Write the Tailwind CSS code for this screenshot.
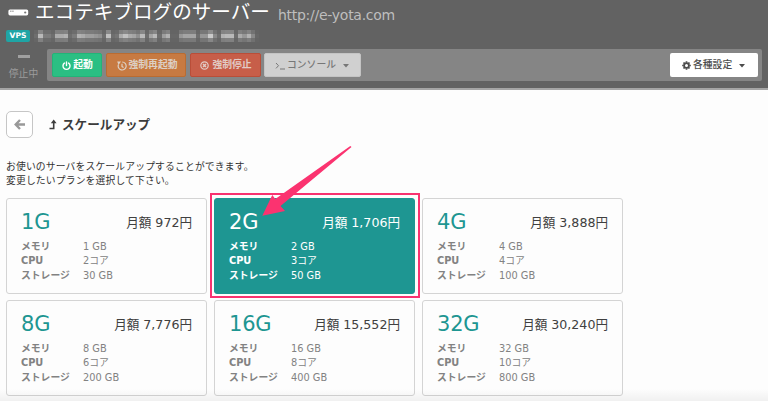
<!DOCTYPE html>
<html lang="ja">
<head>
<meta charset="utf-8">
<title>スケールアップ</title>
<script src="https://cdn.jsdelivr.net/npm/@tailwindcss/browser@4"></script>
</head>
<body class="relative h-[401px] w-[768px] overflow-hidden bg-[#fdfdfd] font-['DejaVu_Sans','Noto_Sans_CJK_JP',sans-serif] text-[9.8px] text-[#404040]">
<header class="h-[90px] border-b-2 border-[#a5a5a5] bg-[#626262]">
  <div class="flex h-[27px] items-center pl-[8px]">
    <svg class="mt-[-2px] shrink-0" width="21" height="7" viewBox="0 0 21 7"><rect x=".4" y=".4" width="19.8" height="6" rx="1.6" fill="#fff"/><path d="M2.3 2.2h1.1M4.4 2.2h1.1" stroke="#626262" stroke-width="1"/><circle cx="17.2" cy="3.5" r="1.1" fill="#777"/></svg>
    <h1 class="ml-[6px] mt-[-2px] whitespace-nowrap text-[19.6px] leading-[24px] text-white">エコテキブログのサーバー</h1>
    <span class="ml-[8px] mt-[3px] whitespace-nowrap text-[14px] leading-[18px] tracking-[-0.27px] text-[#bebebe]">http://e-yota.com</span>
  </div>
  <div class="flex h-[22px] items-start pl-[6px] pt-[3px]">
    <span class="flex h-[12px] w-[24px] items-center justify-center rounded-[2px] bg-[#1fa5a5] text-[7.6px] font-bold text-white">VPS</span>
    <svg id="mask" class="ml-[4px]" width="225" height="12" shape-rendering="crispEdges"></svg>
  </div>
  <div class="flex">
    <div class="flex w-[47px] flex-col items-center text-[#9c9c9c]">
      <span class="mt-[6px] h-[3px] w-[12px] bg-[#a0a0a0]"></span>
      <span class="mt-[9px] text-[9.8px] leading-[14px]">停止中</span>
    </div>
    <div class="flex h-[32px] w-[715px] items-center rounded-[2px] bg-[#858585] pl-[5px] pr-[5px] font-bold">
      <button class="flex h-[24px] w-[50px] items-center justify-center gap-[2px] whitespace-nowrap rounded-[2px] border border-[#23b478] bg-[#2bbf83] pl-[1px] pt-[1px] text-white">
        <svg width="9" height="10" viewBox="0 0 9 10" fill="none" stroke="currentColor" stroke-width="1.4" stroke-linecap="round"><path d="M2.4 2.1a3.5 3.5 0 1 0 4.2 0M4.5 1v3.6"/></svg>起動</button>
      <button class="ml-[4px] flex h-[24px] w-[80px] items-center justify-center gap-[2px] whitespace-nowrap rounded-[2px] border border-[#ba6c32] bg-[#c77a42] pl-[2px] pt-[1px] text-[#ddd0c5]">
        <svg width="10" height="10" viewBox="0 0 10 10" fill="none" stroke="currentColor" stroke-width="1.2"><path d="M5.2 1a4 4 0 1 1-3.7 2.4M5 2.8v2.8l1.6 1"/><path d="M.2.6h3.8L1.5 4z" fill="currentColor" stroke="none"/></svg>強制再起動</button>
      <button class="ml-[4px] flex h-[24px] w-[71px] items-center justify-center gap-[3px] whitespace-nowrap rounded-[2px] border border-[#b94e39] bg-[#c75e49] pl-[1px] pt-[1px] text-[#e2cbc5]">
        <svg width="9" height="9" viewBox="0 0 9 9" fill="none" stroke="currentColor" stroke-width="1.2"><circle cx="4.5" cy="4.5" r="3.7"/><path d="M3 3l3 3M6 3L3 6" stroke-width="1.5"/></svg>強制停止</button>
      <button class="ml-[3px] flex h-[24px] w-[97px] items-center whitespace-nowrap rounded-[2px] border border-[#c4c4c4] bg-[#d0d0d0] pl-[10px] pt-[1px] font-medium text-[#777]">
        <svg class="mr-[2px]" width="10" height="9" viewBox="0 0 10 9" fill="none" stroke="currentColor"><path d="M1 2l2.5 2.7L1 7.4M5 8h5"/></svg>コンソール
        <svg class="ml-[7px]" width="6" height="4" viewBox="0 0 6 4"><path d="M0 0h6L3 3.6z" fill="currentColor"/></svg></button>
      <button class="ml-auto mr-[-1px] flex h-[24px] w-[88px] items-center whitespace-nowrap rounded-[2px] bg-white pl-[12px] pt-[1px] font-medium text-[#4c4c4c]">
        <svg class="mr-[2px]" width="9" height="9" viewBox="-4.5 -4.5 9 9"><circle r="2.4" fill="none" stroke="currentColor" stroke-width="1.8"/><g stroke="currentColor" stroke-width="1.7"><path d="M0-4.3v1.5M0 4.3V2.8M-4.3 0h1.5M4.3 0H2.8M-3-3l1 1M3 3L2 2M-3 3l1-1M3-3L2-2"/></g></svg>各種設定
        <svg class="ml-[7px]" width="6" height="4" viewBox="0 0 6 4"><path d="M0 0h6L3 3.6z" fill="currentColor"/></svg></button>
    </div>
  </div>
</header>
<main class="pl-[6px]">
  <div class="flex items-center pt-[21px]">
    <button class="flex h-[27px] w-[27px] items-center justify-center rounded-[5px] border border-[#c6c6c6] bg-white">
      <svg width="12" height="11" viewBox="0 0 12 11" fill="none" stroke="#999" stroke-width="2.4"><path d="M6 1L1.7 5.5 6 10M2 5.5h9"/></svg></button>
    <svg class="ml-[16px]" width="8" height="11" viewBox="0 0 8 11"><path d="M.5 9.5h4.2V3" fill="none" stroke="#3c3c3c" stroke-width="1.6"/><path d="M1.8 4.2L4.7.4l2.9 3.8z" fill="#3c3c3c"/></svg>
    <h2 class="ml-[5px] text-[12.6px] font-bold leading-[18px] text-[#3c3c3c]">スケールアップ</h2>
  </div>
  <p class="mt-[22px] whitespace-nowrap leading-[14px] tracking-[0.15px] text-[#333]">お使いのサーバをスケールアップすることができます。<br>変更したいプランを選択して下さい。</p>
  <section id="plans" class="mt-[10px] grid grid-cols-[repeat(3,201px)] gap-x-[7px] gap-y-[6px]"></section>
</main>
<div class="pointer-events-none absolute left-[210px] top-[193px] h-[105px] w-[210px] border-2 border-[#f93270]"></div>
<svg class="pointer-events-none absolute left-[255px] top-[140px]" width="100" height="80"><path d="M95.3 6L96.5 7.1 25.5 66 30 71 7.3 75.7 17.3 55 20.3 59z" fill="#fb3370"/></svg>
<div class="pointer-events-none absolute bottom-0 left-0 h-[12px] w-full bg-linear-to-b from-transparent to-black/5"></div>
<script>
const plans = [['1G','972','1 GB','2コア','30 GB'],['2G','1,706','2 GB','3コア','50 GB'],['4G','3,888','4 GB','4コア','100 GB'],['8G','7,776','8 GB','6コア','200 GB'],['16G','15,552','16 GB','8コア','400 GB'],['32G','30,240','32 GB','10コア','800 GB']];
document.getElementById('plans').innerHTML = plans.map((p, i) => {
  const on = i === 1;
  return `<article class="h-[96px] rounded-[3px] border px-[14px] pt-[11px] ${on ? 'border-[#1e9692] bg-[#1e9692] text-white' : 'border-[#d4d4d4] text-[#828282]'}">
    <div class="flex h-[22px] items-center justify-between whitespace-nowrap">
      <h3 class="mt-[2px] text-[21px] leading-[22px] tracking-[-0.2px] ${on ? 'text-white' : 'text-[#1e9692]'}">${p[0]}</h3>
      <span class="mt-[3px] text-[12.6px] leading-[18px] ${on ? 'text-white' : 'text-[#404040]'}">月額 ${p[1]}円</span>
    </div>
    <dl class="mt-[8px] grid grid-cols-[62px_1fr] auto-rows-[14.3px] items-center whitespace-nowrap leading-[14px]">
      <dt class="font-bold">メモリ</dt><dd>${p[2]}</dd><dt class="font-bold">CPU</dt><dd>${p[3]}</dd><dt class="font-bold">ストレージ</dt><dd>${p[4]}</dd>
    </dl></article>`;
}).join('');
// Mosaic over the host name: brightness of each column
const cols = [112,200,128,128,112,184,184,192,112,128,192,184,168,168,160,152,112,208,112,120,184,208,184,176,152,200,112,176,200,112,168,192,104,104,160,176,176,176,112,160,160,220,144,112,192,200,200,112,184,160,192,144,104];
document.getElementById('mask').innerHTML = cols.map((v, i) =>
  [.35, .85, .3].map((k, r) => {
    const g = Math.round(98 + (v - 98) * k);
    return `<rect x="${i * 4.25}" y="${r * 4}" width="4.3" height="4" fill="rgb(${g},${g},${g})"/>`;
  }).join('')).join('');
</script>
</body>
</html>
